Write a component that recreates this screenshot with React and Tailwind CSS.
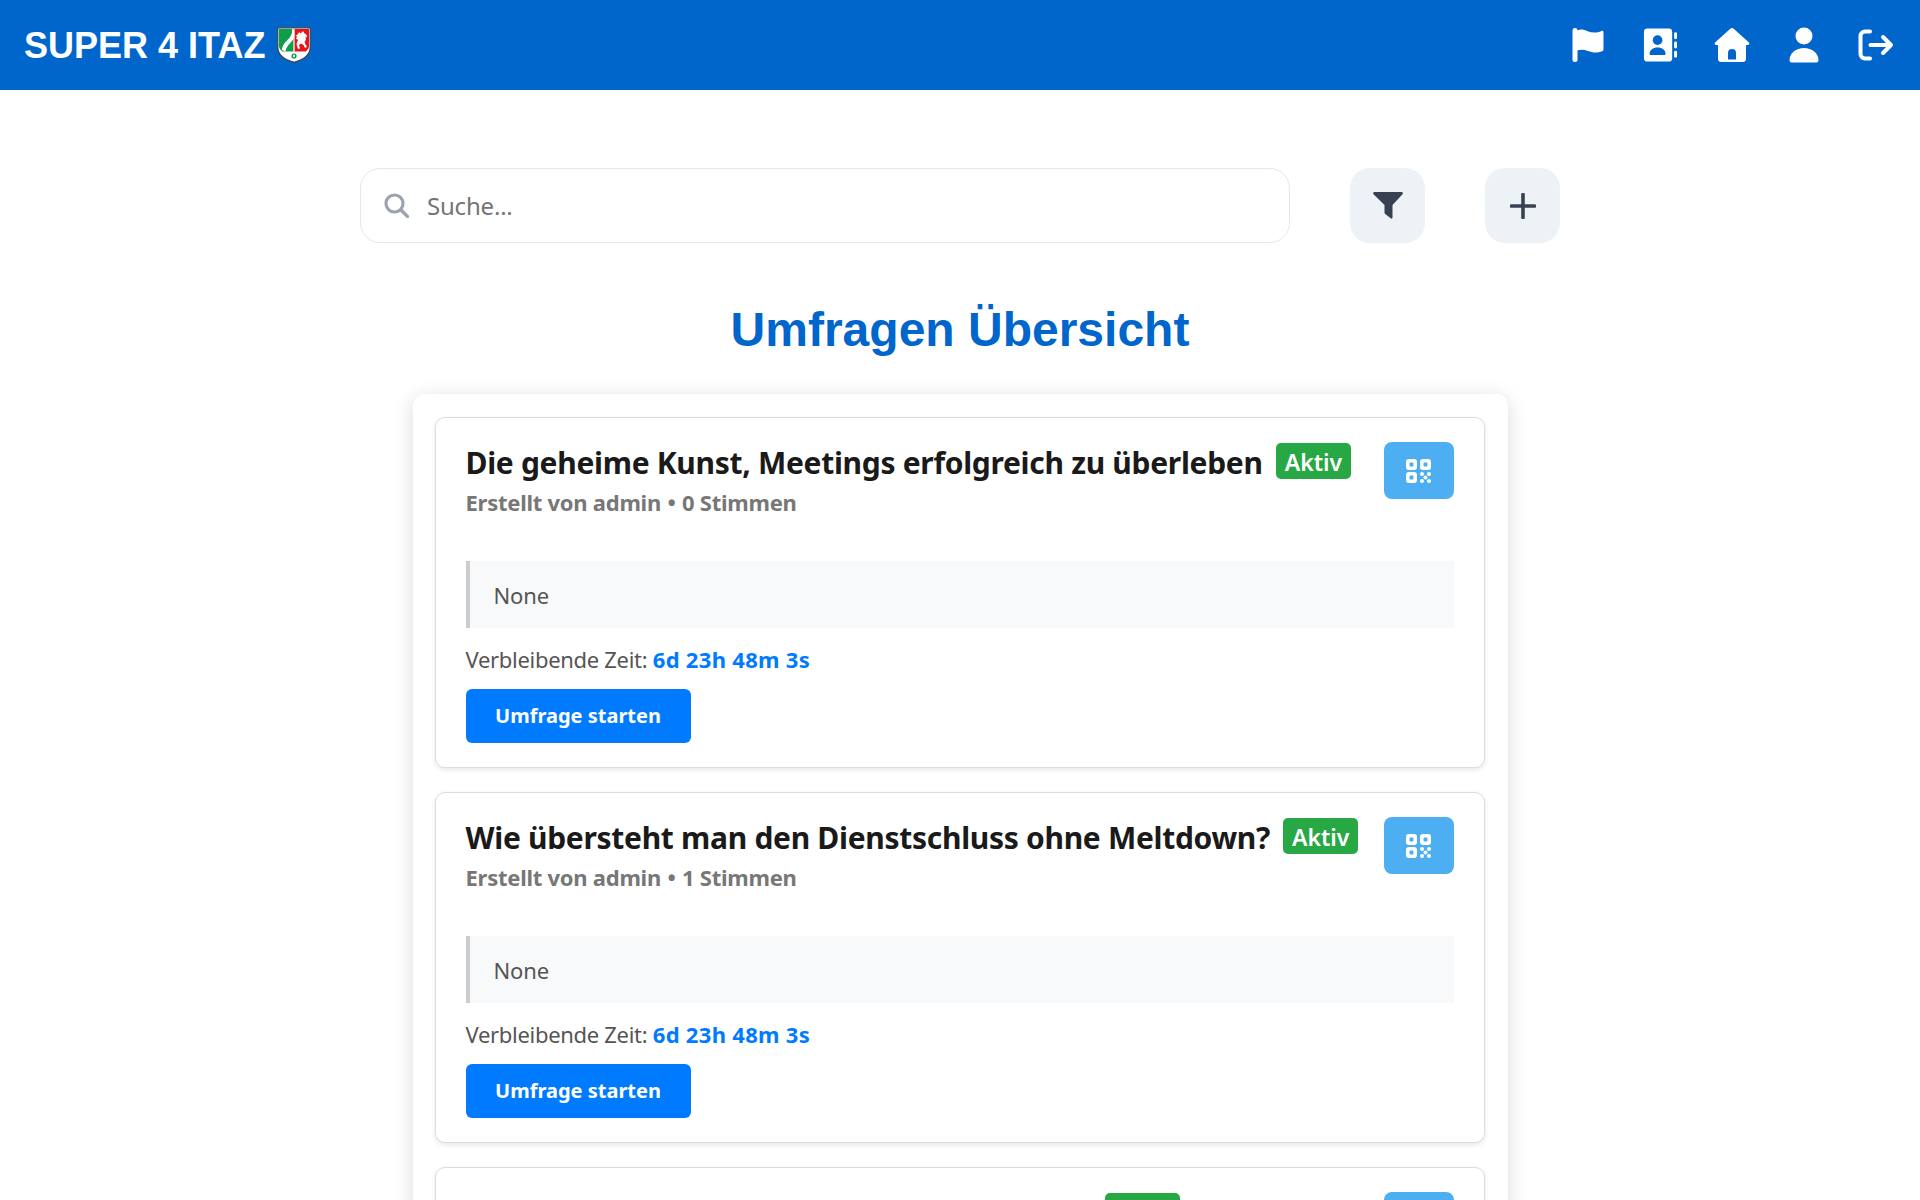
import React from "react";

const FONT = { fontFamily: '"Noto Sans", "Open Sans", sans-serif' };
const ARIAL = { fontFamily: '"Liberation Sans", Arial, sans-serif' };

const polls = [
  { title: "Die geheime Kunst, Meetings erfolgreich zu überleben", votes: 0 },
  { title: "Wie übersteht man den Dienstschluss ohne Meltdown?", votes: 1 },
  { title: "Was tun, wenn der Drucker wieder streikt?", votes: 0 },
];

const Emblem = () => (
  <svg width="34" height="36" viewBox="0 0 34 36">
    <path d="M.8.8h32.400v19.500c0 8.500-7 12.500-16.200 15C7.800 32.800.8 28.800.8 20.300z" fill="#fff" stroke="#3a3f46" strokeWidth="1.200" />
    <path d="M2 2h14.400v22.500H5.500C3.200 23 2 21 2 19z" fill="#0f9d4a" />
    <path d="M17.600 2H32v17c0 2-1.200 4-3.500 5.500H17.600z" fill="#e8141c" />
    <path d="M15 2c.8 5-1.800 8.500-5 11.500-3 3-5 6-5.200 9.500l3.700 1.500c.3-3.500 2.500-6.500 5.300-9 3-3 4.500-7.500 2.600-13.500z" fill="#fff" />
    <path d="M20 8l2.500-3 1 1.500L26 4l1.500 2.500c1.800.5 2.800 2 2.500 4l-1.500-1 .5 3.500-1.500 1.500 1 3 1.500 2-2 1.500-1.500-3-2.500-1.500-2 1.500 1 3.500-2 .5-1.500-5 1.500-4-2-1.500 1-2-1.500-1z" fill="#fff" />
    <circle cx="17" cy="29" r="2.600" fill="#0f9d4a" />
    <circle cx="17" cy="29" r="1.200" fill="#fff" />
  </svg>
);

const FlagIcon = () => (
  <svg width="32" height="36" viewBox="0 0 32 36" fill="#fff">
    <rect x="0.500" y="1" width="5" height="34" rx="2.500" />
    <path d="M5 3.500c3.500-1.500 6.500-1 10 .5 5 2 10 2 14.500 0 1-.5 2 0 2 1.200v17.300c0 .8-.5 1.400-1.300 1.700-5 2-9.700 1.500-14.200-.2-3.500-1.300-7-1.800-11-.5z" />
  </svg>
);

const ContactsIcon = () => (
  <svg width="36" height="36" viewBox="0 0 36 36" className="ml-[1px]">
    <rect x="1" y="1" width="29" height="34" rx="3.500" fill="#fff" />
    <circle cx="15" cy="13" r="5" fill="#0066cc" />
    <path d="M6.800 27c0-3.800 3.400-6.500 8.200-6.500s8.200 2.700 8.200 6.500c0 .8-.5 1.300-1.300 1.300H8.100c-.8 0-1.300-.5-1.300-1.300z" fill="#0066cc" />
    <rect x="32" y="5" width="3" height="7" rx="1.500" fill="#fff" />
    <rect x="32" y="14.500" width="3" height="7" rx="1.500" fill="#fff" />
    <rect x="32" y="24" width="3" height="7" rx="1.500" fill="#fff" />
  </svg>
);

const HomeIcon = () => (
  <svg width="36" height="36" viewBox="0 0 36 36">
    <path d="M16.300 1.700a2.500 2.500 0 0 1 3.400 0l15 13.500c1.300 1.200.5 2.800-1 2.800H32v13.500a3.500 3.500 0 0 1-3.500 3.500h-21A3.500 3.500 0 0 1 4 31.500V18H2.300c-1.500 0-2.300-1.600-1-2.800z" fill="#fff" />
    <path d="M14 32.500V26a4 4 0 0 1 8 0v6.500z" fill="#0066cc" />
  </svg>
);

const UserIcon = () => (
  <svg width="30" height="36" viewBox="0 0 30 36" fill="#fff">
    <circle cx="15" cy="9" r="8.500" />
    <path d="M.500 33c0-6.500 6.500-12 14.500-12s14.500 5.500 14.500 12c0 1.500-.8 2.500-2 2.500h-25c-1.200 0-2-1-2-2.500z" />
  </svg>
);

const LogoutIcon = () => (
  <svg width="36" height="32" viewBox="0 0 36 32" fill="none" stroke="#fff" strokeWidth="4" strokeLinecap="round" strokeLinejoin="round">
    <path d="M12 2.500H7A4.500 4.500 0 0 0 2.500 7v18A4.500 4.500 0 0 0 7 29.500h5" />
    <path d="M12.500 16h20.500M25 8l8 8-8 8" />
  </svg>
);

const QrIcon = () => (
  <svg width="25" height="24" viewBox="0 0 25 24" fill="#fff">
    <path fillRule="evenodd" d="M3 0h5a3 3 0 0 1 3 3v5a3 3 0 0 1-3 3H3a3 3 0 0 1-3-3V3a3 3 0 0 1 3-3zM4.500 3.500a1 1 0 0 0-1 1v2a1 1 0 0 0 1 1h2a1 1 0 0 0 1-1v-2a1 1 0 0 0-1-1z" />
    <path fillRule="evenodd" d="M17 0h5a3 3 0 0 1 3 3v5a3 3 0 0 1-3 3h-5a3 3 0 0 1-3-3V3a3 3 0 0 1 3-3zM18.500 3.500a1 1 0 0 0-1 1v2a1 1 0 0 0 1 1h2a1 1 0 0 0 1-1v-2a1 1 0 0 0-1-1z" />
    <path fillRule="evenodd" d="M3 13h5a3 3 0 0 1 3 3v5a3 3 0 0 1-3 3H3a3 3 0 0 1-3-3v-5a3 3 0 0 1 3-3zM4.500 16.500a1 1 0 0 0-1 1v2a1 1 0 0 0 1 1h2a1 1 0 0 0 1-1v-2a1 1 0 0 0-1-1z" />
    <circle cx="16" cy="15" r="2" />
    <circle cx="23" cy="15" r="2" />
    <circle cx="19.500" cy="18.500" r="2" />
    <circle cx="16" cy="22" r="2" />
    <circle cx="23" cy="22" r="2" />
  </svg>
);

const SearchIcon = () => (
  <svg width="25" height="25" viewBox="0 0 25 25" fill="none" stroke="#9ca3af" strokeWidth="3.200" strokeLinecap="round">
    <circle cx="10.500" cy="10.500" r="8.500" />
    <path d="M17 17l6.500 6.500" />
  </svg>
);

const FilterIcon = () => (
  <svg width="30" height="27" viewBox="0 0 30 27" fill="#374151">
    <path d="M1.500 0h27c1.200 0 1.800 1.400 1 2.300L19.500 13v12.500c0 1-1 1.500-1.800.8l-5.500-4.300a1.500 1.500 0 0 1-.7-1.200V13L.5 2.300C-.3 1.400.3 0 1.500 0z" />
  </svg>
);

const PlusIcon = () => (
  <svg width="26" height="26" viewBox="0 0 26 26" fill="none" stroke="#374151" strokeWidth="3.600" strokeLinecap="round">
    <path d="M13 1.500v23M1.500 13h23" />
  </svg>
);

const NavItem = ({ children }) => (
  <span className="flex w-[36px] justify-center">{children}</span>
);

const PollCard = ({ title, votes }) => (
  <div className="rounded-[10px] border border-[#dddddd] bg-white pt-[24px] px-[30px] pb-[24px] shadow-[0_2px_5px_rgba(0,0,0,0.1)]">
    <div className="flex items-start justify-between">
      <div>
        <div className="flex items-start gap-[13px]">
          <h3 className="text-[30px] leading-[42px] font-bold text-[#1a1a1a] tracking-[-0.3px]">{title}</h3>
          <span className="mt-[1px] h-[36px] rounded-[5px] bg-[#28a745] px-[9px] text-[23px] leading-[38px] font-semibold text-white">Aktiv</span>
        </div>
        <p className="mt-[3px] text-[22px] leading-[30px] font-bold text-[#777777] tracking-[-0.25px]">
          Erstellt von admin <span className="mx-[1px]">•</span> {votes} Stimmen
        </p>
      </div>
      <button className="flex h-[57px] w-[70px] shrink-0 items-center justify-center rounded-[8px] bg-[#4daef2]">
        <QrIcon />
      </button>
    </div>
    <div className="mt-[44px] h-[67px] border-l-4 border-[#cccccc] bg-[#f8f9fa] pl-[24px] text-[22px] leading-[69px] text-[#555555] tracking-[-0.1px]">None</div>
    <p className="mt-[16px] text-[22px] leading-[30px] text-[#555555] tracking-[-0.3px]">
      Verbleibende Zeit: <span className="font-bold text-[#007bff] tracking-[0.3px]">6d 23h 48m 3s</span>
    </p>
    <button className="mt-[15px] h-[54px] w-[225px] rounded-[6px] bg-[#007bff] text-[20px] font-bold text-white">Umfrage starten</button>
  </div>
);

export default function App() {
  return (
    <div className="h-screen overflow-hidden bg-white" style={FONT}>
      <header className="flex h-[90px] items-center justify-between bg-[#0066cc] pl-[24px] pr-[26px]">
        <div className="flex items-center gap-[12px]">
          <span className="pt-[2px] text-[36px] font-bold text-white" style={ARIAL}>SUPER 4 ITAZ</span>
          <Emblem />
        </div>
        <nav className="flex items-center gap-[36px]">
          <NavItem><FlagIcon /></NavItem>
          <NavItem><ContactsIcon /></NavItem>
          <NavItem><HomeIcon /></NavItem>
          <NavItem><UserIcon /></NavItem>
          <NavItem><LogoutIcon /></NavItem>
        </nav>
      </header>

      <main className="mx-auto w-[1200px] pt-[78px]">
        <div className="flex gap-[60px]">
          <div className="flex h-[75px] w-[930px] items-center gap-[18px] rounded-[20px] border border-[#e2e8f0] bg-white pl-[23px]">
            <SearchIcon />
            <input className="flex-1 bg-transparent text-[24px] tracking-[-0.2px] text-[#555555] outline-none placeholder:text-[#757575]" placeholder="Suche..." />
          </div>
          <button className="flex h-[75px] w-[75px] items-center justify-center rounded-[20px] bg-[#edf2f7]"><FilterIcon /></button>
          <button className="flex h-[75px] w-[75px] items-center justify-center rounded-[20px] bg-[#edf2f7]"><PlusIcon /></button>
        </div>

        <h1 className="mt-[57px] text-center text-[48px] leading-[60px] font-bold text-[#0066cc]" style={ARIAL}>Umfragen Übersicht</h1>

        <div className="mx-auto mt-[34px] flex w-[1095px] flex-col gap-[24px] rounded-[12px] bg-white pl-[22px] pr-[23px] pt-[23px] shadow-[0_4px_20px_rgba(0,0,0,0.15)]">
          {polls.map((poll) => (
            <PollCard key={poll.title} title={poll.title} votes={poll.votes} />
          ))}
        </div>
      </main>
    </div>
  );
}
